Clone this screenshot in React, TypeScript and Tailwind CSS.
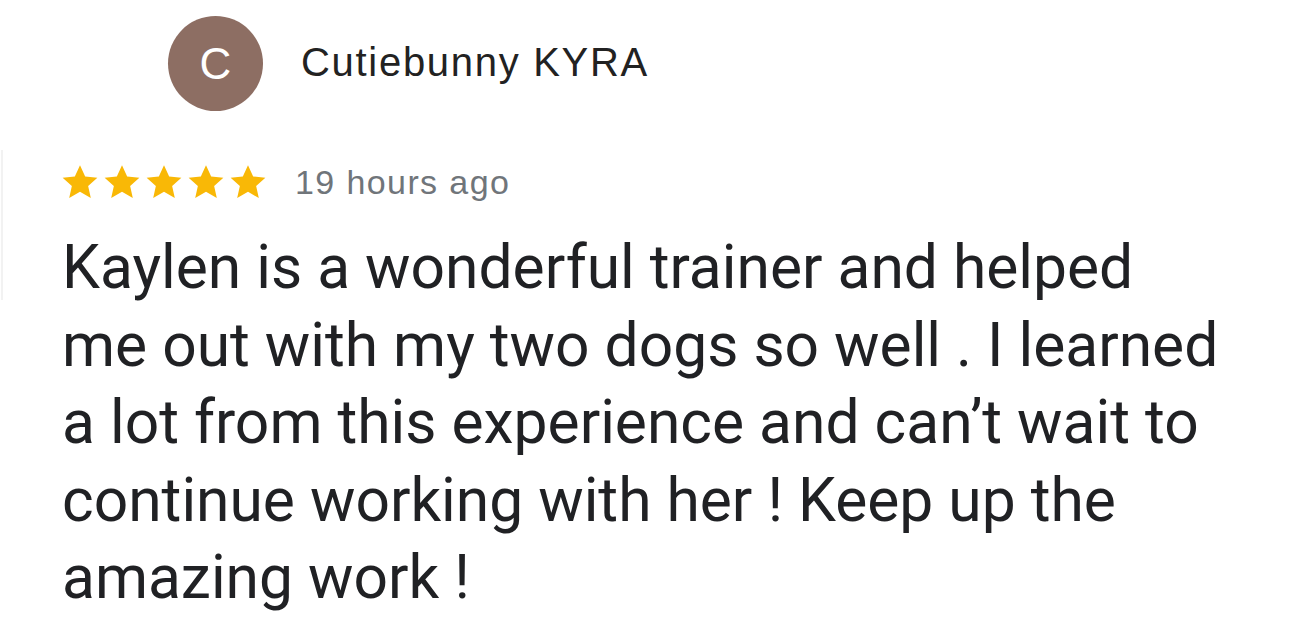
import React from "react";

const Star = () => (
  <svg width="38" height="36" viewBox="0 0 24 23" className="shrink-0">
    <path d="M12 0.8l3.3 7.2 7.8 0.8-5.9 5.3 1.7 7.7L12 17.8l-6.9 4 1.7-7.7L0.9 8.8l7.8-0.8z" fill="#F9B806" />
  </svg>
);

export default function App() {
  return (
    <div className="w-[1290px] h-[641px] bg-white overflow-hidden relative" style={{ fontFamily: "Roboto, 'Open Sans', sans-serif" }}>
      <div className="absolute left-[1px] top-[150px] w-[2px] h-[150px] bg-[#f2f2f2]" />
      <div className="flex items-center pl-[168px] pt-[16px] gap-[38px]">
        <div className="w-[95px] h-[95px] rounded-full bg-[#8D6E63] flex items-center justify-center text-white text-[44px] leading-none" style={{ fontFamily: "'Liberation Sans', Arial, sans-serif" }}>C</div>
        <div className="text-[40px] text-[#222222] leading-none pb-[4px] tracking-[1.7px]" style={{ fontFamily: "'Liberation Sans', Arial, sans-serif" }}>Cutiebunny KYRA</div>
      </div>
      <div className="flex items-center pl-[61px] mt-[53px] gap-[28px]">
        <div className="flex gap-[4px]">
          <Star /><Star /><Star /><Star /><Star />
        </div>
        <div className="text-[34px] text-[#70757a] leading-none tracking-[1.4px]" style={{ fontFamily: "'Liberation Sans', Arial, sans-serif" }}>19 hours ago</div>
      </div>
      <div className="pl-[62px] mt-[29px] text-[60.5px] leading-[77.5px] text-[#202124] w-[1290px]">
        Kaylen is a wonderful trainer and helped<br />
        me out with my two dogs so well . I learned<br />
        a lot from this experience and can’t wait to<br />
        continue working with her ! Keep up the<br />
        amazing work !
      </div>
    </div>
  );
}
